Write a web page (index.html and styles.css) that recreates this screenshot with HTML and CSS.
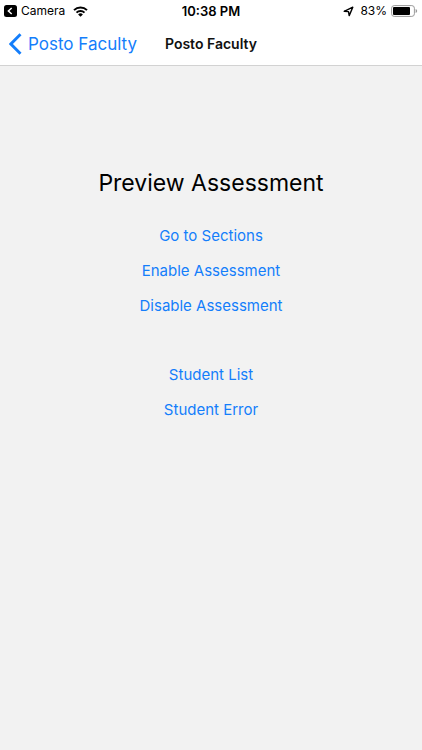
FILE: index.html
```html
<!DOCTYPE html>
<html lang="en">
<head>
<meta charset="utf-8">
<meta name="viewport" content="width=device-width, initial-scale=1">
<title>Posto Faculty</title>
<link rel="stylesheet" href="styles.css">
</head>
<body>
<header class="top">
  <div class="status">
    <a class="status-left" href="#">
      <svg width="13" height="12" viewBox="0 0 13 12" aria-hidden="true"><rect width="13" height="12" rx="2.5" fill="#000"/><path d="M7.7 3 4.4 6l3.3 3" fill="none" stroke="#fff" stroke-width="1.5"/></svg>
      <span class="app">Camera</span>
      <svg width="15" height="11" viewBox="0 0 15 11" aria-hidden="true"><g fill="none" stroke="#000" stroke-width="2"><path d="M1 4.1a9.4 9.4 0 0 1 13 0"/><path d="M3.5 6.6a5.8 5.8 0 0 1 8 0"/></g><path d="M7.5 10.8 5.1 8.4a3.4 3.4 0 0 1 4.8 0z"/></svg>
    </a>
    <time class="time">10:38 PM</time>
    <div class="status-right">
      <svg width="11" height="11" viewBox="0 0 11 11" aria-hidden="true"><path d="M1.2 5.3 9.8 1.2 6.2 9.6 5.5 5.6z" fill="none" stroke="#000" stroke-width="1.4" stroke-linejoin="round"/></svg>
      <span class="percent">83%</span>
      <svg width="27" height="12" viewBox="0 0 27 12" aria-hidden="true"><rect x=".6" y=".6" width="22.8" height="10.8" rx="2.6" fill="#fff" stroke="#999" stroke-width="1"/><rect x="2" y="2" width="17" height="8" rx="1"/><path d="M24.6 4v4q1.6-.6 1.6-2t-1.6-2z" fill="#999"/></svg>
    </div>
  </div>
  <nav class="nav">
    <a class="back" href="#">
      <svg width="13" height="22" viewBox="0 0 13 22" aria-hidden="true"><path d="M11.5 1.3 1.9 11l9.6 9.7" fill="none" stroke="currentColor" stroke-width="2.9"/></svg>
      <span>Posto Faculty</span>
    </a>
    <span class="nav-title">Posto Faculty</span>
  </nav>
</header>
<main class="content">
  <h1 class="heading">Preview Assessment</h1>
  <div class="actions">
    <button type="button">Go to Sections</button>
    <button type="button">Enable Assessment</button>
    <button type="button">Disable Assessment</button>
  </div>
  <div class="actions">
    <button type="button">Student List</button>
    <button type="button">Student Error</button>
  </div>
</main>
</body>
</html>
```
FILE: styles.css
```css
* { box-sizing: border-box; }

body {
  margin: 0;
  min-height: 100vh;
  background: #f2f2f2;
  color: #000;
  font-family: Inter, "Liberation Sans", sans-serif;
}

.top {
  background: #fff;
  border-bottom: 1px solid #d2d2d2;
}

.status,
.nav {
  display: grid;
  grid-template-columns: 1fr auto 1fr;
  align-items: center;
}

.status {
  height: 22px;
  padding: 0 4px;
  font-size: 12px;
  line-height: 22px;
}

.status-left,
.status-right {
  display: flex;
  align-items: center;
  gap: 4px;
  color: inherit;
  text-decoration: none;
}

.status-right { justify-content: flex-end; }
.app { margin-right: 4px; }
.percent { margin-left: 2px; }
.time { font-size: 13px; font-weight: 600; }

.nav {
  height: 43px;
  padding: 0 9px;
}

.back {
  display: flex;
  align-items: center;
  gap: 6px;
  color: #147efb;
  font-size: 17px;
  text-decoration: none;
  white-space: nowrap;
}

.nav-title {
  color: #111;
  font-size: 14px;
  font-weight: 600;
}

.content {
  display: flex;
  flex-direction: column;
  align-items: center;
  padding: 101px 0 40px;
}

.heading {
  margin: 0 0 27px;
  font-size: 23px;
  font-weight: 400;
  line-height: 32px;
}

.actions {
  display: flex;
  flex-direction: column;
  align-items: center;
  gap: 15px;
  margin-bottom: 49px;
}

.actions button {
  padding: 0;
  border: 0;
  background: none;
  color: #147efb;
  font-family: inherit;
  font-size: 15px;
  line-height: 20px;
}
```
